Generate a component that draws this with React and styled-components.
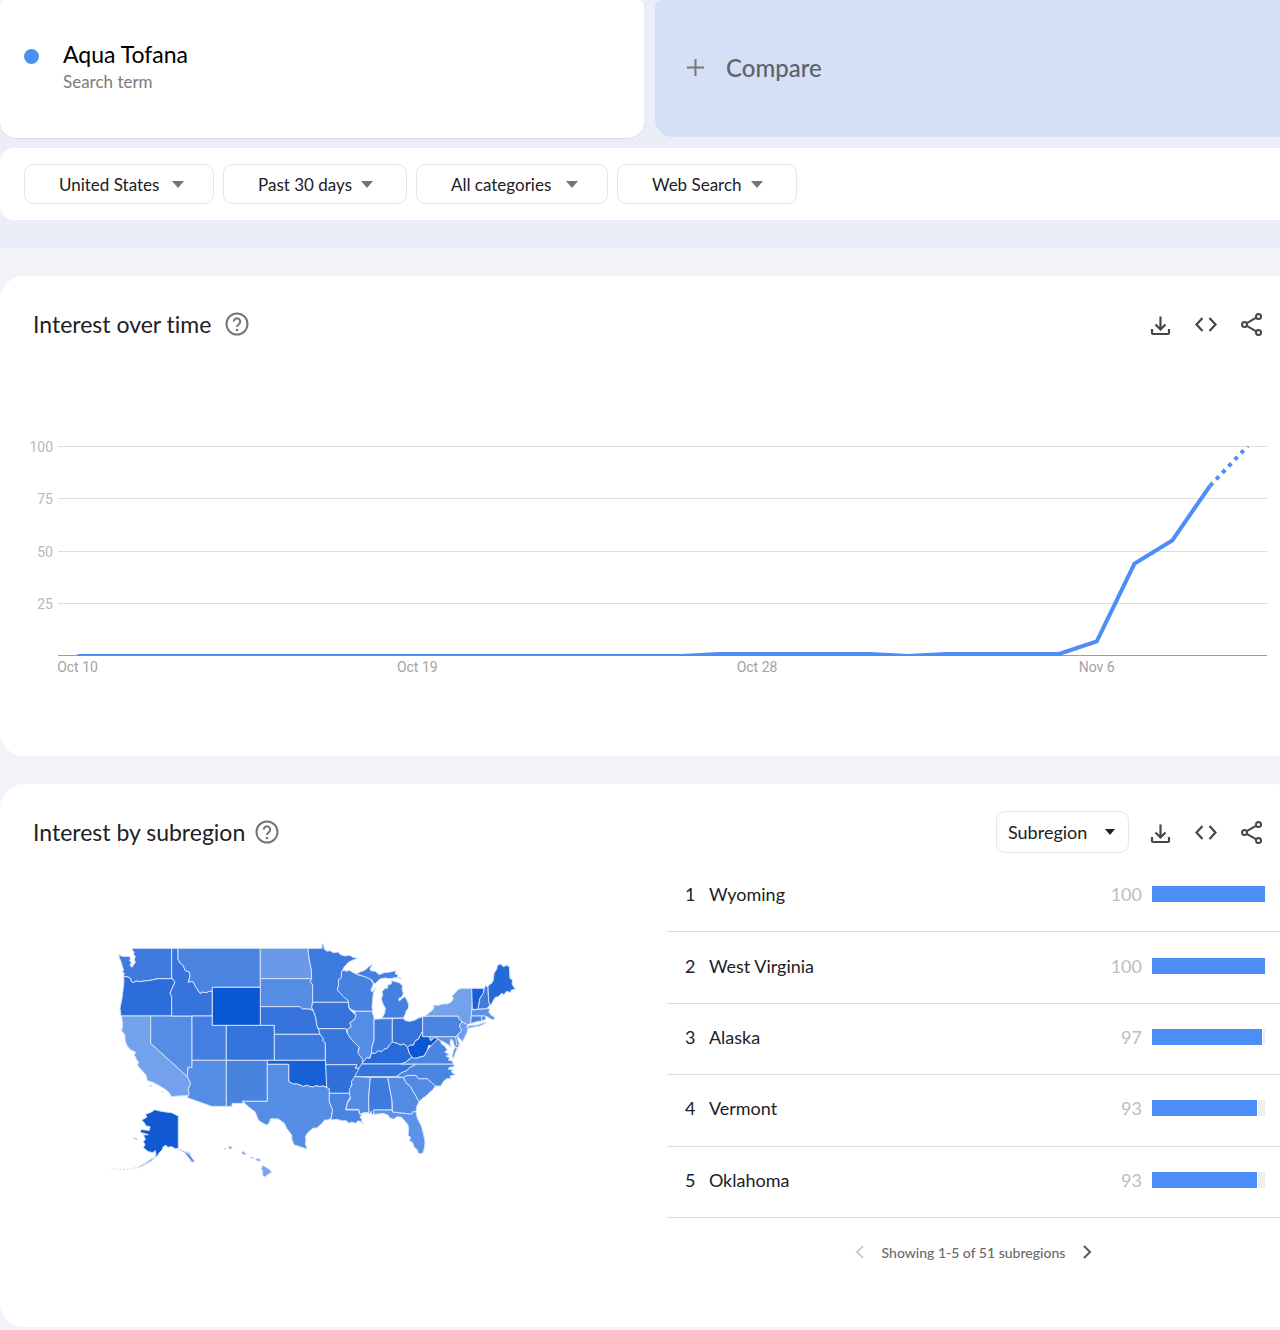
import React from 'react';
import styled, { createGlobalStyle } from 'styled-components';

const GlobalStyle = createGlobalStyle`
  * {
    box-sizing: border-box;
  }

  body {
    margin: 0;
    background-color: #f2f3f8;
    color: #202124;
    font-family: Lato, Roboto, sans-serif;
    font-variant-ligatures: none;
    overflow-x: hidden;
  }

  button,
  select {
    font-family: inherit;
    color: inherit;
  }
`;

const Page = styled.div`
  overflow: hidden;
  padding-bottom: 3px;
`;

const TopArea = styled.header`
  background-color: #ebeef8;
  padding-bottom: 28px;
`;

const Terms = styled.div`
  display: grid;
  grid-template-columns: 1fr 1fr;
  gap: 11px;
  height: 138px;
  margin-right: -19px;
`;

const TermCard = styled.section`
  display: flex;
  align-items: flex-start;
  padding: 40px 24px;
  background-color: #fff;
  border-radius: 4px 6px 16px 16px;
  box-shadow: 0 1px 1px rgba(60, 64, 67, 0.1);
`;

const Dot = styled.span`
  width: 15px;
  height: 15px;
  margin: 9px 24px 0 0;
  border-radius: 50%;
  background-color: #4c8df6;
`;

const TermName = styled.h1`
  margin: 0;
  color: #000;
  font-size: 23px;
  font-weight: 400;
  line-height: 28px;
`;

const TermKind = styled.p`
  margin: 4px 0 0;
  color: #7c7c7c;
  font-size: 17px;
  line-height: 20px;
`;

const CompareButton = styled.button`
  display: flex;
  align-items: center;
  gap: 22px;
  height: 137px;
  padding: 0 32px 3px;
  border: 0;
  border-radius: 8px 0 0 18px;
  background-color: #d5dff6;
  color: #5f6368;
  font-size: 24px;
  font-weight: 500;
`;

const Filters = styled.form`
  display: flex;
  gap: 9px;
  margin-top: 10px;
  margin-right: -19px;
  padding: 16px 24px;
  border-radius: 14px;
  background-color: #fff;
`;

const SelectBox = styled.label`
  position: relative;
  display: block;
`;

const Select = styled.select`
  appearance: none;
  width: ${({ $width }) => $width}px;
  height: ${({ $tall }) => ($tall ? 42 : 40)}px;
  padding: 0 0 0 ${({ $tall }) => ($tall ? 11 : 34)}px;
  border: 1px solid #e6e7e9;
  border-radius: 9px;
  background-color: #fff;
  font-size: ${({ $tall }) => ($tall ? 18 : 17)}px;
`;

const Arrow = styled.span`
  position: absolute;
  top: 50%;
  right: ${({ $right }) => $right}px;
  margin-top: -3px;
  border: solid transparent;
  border-width: ${({ $dark }) => ($dark ? '6px 5px 0' : '7px 6px 0')};
  border-top-color: ${({ $dark }) => ($dark ? '#202124' : '#757575')};
  pointer-events: none;
`;

const Card = styled.section`
  margin: 28px -19px 0 0;
  padding-right: 19px;
  border-radius: 24px;
  background-color: #fff;
`;

const CardHeader = styled.div`
  display: flex;
  align-items: center;
  height: 96px;
  padding: 0 16px 0 33px;
`;

const CardTitle = styled.h2`
  margin: 0;
  font-size: 23px;
  font-weight: 400;
`;

const IconButton = styled.button`
  display: flex;
  padding: 0;
  border: 0;
  background: none;
  color: ${({ $color }) => $color || '#444746'};
`;

const HelpButton = styled(IconButton)`
  margin-left: ${({ $gap }) => $gap}px;
`;

const Actions = styled.div`
  display: flex;
  align-items: center;
  gap: 19px;
  margin-left: auto;
`;

const ActionIcons = styled.div`
  display: flex;
  gap: 22px;
`;

const ChartArea = styled.div`
  padding: 64px 0 70px;

  svg {
    display: block;
    width: 100%;
  }

  text {
    fill: #a3a3a3;
    font-family: Roboto, sans-serif;
    font-size: 14px;
  }

  .value {
    fill: #b8b8b8;
  }
`;

const RegionBody = styled.div`
  display: grid;
  grid-template-columns: minmax(0, 52.1fr) minmax(0, 47.9fr);
  margin-top: -19px;
  padding-bottom: 41px;
`;

const MapArea = styled.div`
  padding: 69px 0 0 15%;

  svg {
    display: block;
    width: 420px;
    height: 260px;
  }
`;

const RegionList = styled.ol`
  display: grid;
  grid-auto-rows: 1fr;
  height: 357px;
  margin: 0;
  padding: 0;
  list-style: none;
`;

const RegionRow = styled.li`
  display: flex;
  align-items: center;
  padding: 0 15px 4px 18px;
  border-bottom: 1px solid #dcdde0;
  font-size: 18px;
`;

const Rank = styled.span`
  width: 24px;
`;

const RegionName = styled.span`
  flex: 1;
`;

const Value = styled.span`
  margin-right: 10px;
  color: #bdbdbd;
`;

const BarTrack = styled.span`
  width: 113px;
  height: 16px;
  background-color: #eee;
`;

const BarFill = styled.span`
  display: block;
  box-sizing: content-box;
  height: 100%;
  border-right: ${({ $full }) => ($full ? 0 : '1px solid #fff')};
  background-color: #4c8df6;
`;

const Pager = styled.nav`
  display: flex;
  align-items: center;
  justify-content: center;
  gap: 12px;
  height: 68px;
  color: #6b6b6b;
  font-size: 14px;
  font-weight: 500;
`;

const HelpIcon = () => (
  <svg width="24" height="24" viewBox="0 0 24 24" fill="none" stroke="currentColor" strokeWidth="2">
    <circle cx="12" cy="12" r="10.5" />
    <path d="M8.8 9.6a3.2 3.2 0 1 1 5.3 2.3C12.9 12.9 12 13.5 12 15" />
    <circle cx="12" cy="18" r="1.3" fill="currentColor" stroke="none" />
  </svg>
);

const DownloadIcon = () => (
  <svg width="24" height="24" viewBox="0 0 24 24" fill="none" stroke="currentColor" strokeWidth="2.2">
    <path d="M12.500 4.500v13M7.500 12.500l5 5 5-5" />
    <path d="M4 17v4a1 1 0 0 0 1 1h15a1 1 0 0 0 1-1v-4" />
  </svg>
);

const CodeIcon = () => (
  <svg width="24" height="24" viewBox="0 0 24 24" fill="none" stroke="currentColor" strokeWidth="2.2">
    <path d="M8.5 6l-6 6.500 6 6.500M15.500 6l6 6.500-6 6.500" />
  </svg>
);

const ShareIcon = () => (
  <svg width="24" height="24" viewBox="0 0 24 24" fill="none" stroke="currentColor" strokeWidth="2">
    <circle cx="4.500" cy="12.500" r="2.500" />
    <circle cx="18.500" cy="4.500" r="2.500" />
    <circle cx="18.500" cy="20.500" r="2.500" />
    <path d="M6.800 11.200l9.500-5.500M6.800 13.800l9.500 5.500" />
  </svg>
);

const PlusIcon = () => (
  <svg width="17" height="17" viewBox="0 0 17 17" stroke="#757a7a" strokeWidth="2">
    <path d="M8.5 0v17M0 8.500h17" />
  </svg>
);

const Chevron = ({ d }) => (
  <svg width="20" height="20" viewBox="0 0 20 20" fill="none" stroke="currentColor" strokeWidth="2.2">
    <path d={d} />
  </svg>
);

const filters = [
  { label: 'Location', value: 'United States', width: 190, right: 30 },
  { label: 'Time range', value: 'Past 30 days', width: 184, right: 34 },
  { label: 'Category', value: 'All categories', width: 192, right: 30 },
  { label: 'Search type', value: 'Web Search', width: 180, right: 34 },
];

const regions = [
  { name: 'Wyoming', value: 100 },
  { name: 'West Virginia', value: 100 },
  { name: 'Alaska', value: 97 },
  { name: 'Vermont', value: 93 },
  { name: 'Oklahoma', value: 93 },
];

// daily values from Oct 10, the last one is still partial
const interest = [
  0, 0, 0, 0, 0, 0, 0, 0, 0, 0, 0, 0, 0, 0, 0, 0, 0, 1, 1, 1, 1, 1, 0, 1, 1, 1, 1, 7, 44, 55, 81, 100,
];

const ticks = [
  { day: 0, label: 'Oct 10' },
  { day: 9, label: 'Oct 19' },
  { day: 18, label: 'Oct 28' },
  { day: 27, label: 'Nov 6' },
];

const xOf = (day) => 77.5 + day * 37.75;
const yOf = (value) => 220 - value * 2.1;

const TimeChart = () => {
  const points = interest.map((value, day) => `${xOf(day)},${yOf(value)}`);

  return (
    <svg viewBox="0 0 1280 250" role="img" aria-label="Interest over time">
      <clipPath id="plot">
        <rect x="58" y="10" width="1210" height="210" />
      </clipPath>
      {[25, 50, 75, 100].map((value) => (
        <g key={value}>
          <rect x="58" y={Math.floor(yOf(value))} width="1209" height="1" fill="#dedede" />
          <text className="value" x="53" y={Math.floor(yOf(value)) + 6} textAnchor="end">
            {value}
          </text>
        </g>
      ))}
      <rect x="58" y="219" width="1209" height="1" fill="#9e9e9e" />
      <g clipPath="url(#plot)" fill="none" stroke="#4c8df6" strokeWidth="4">
        <polyline points={points.slice(0, -1).join(' ')} />
        <polyline points={points.slice(-2).join(' ')} strokeDasharray="4 5" />
      </g>
      {ticks.map(({ day, label }) => (
        <text key={label} x={xOf(day)} y="236" textAnchor="middle">
          {label}
        </text>
      ))}
    </svg>
  );
};

const westStates = [
  ['WA', '#3f7bdf', '97,55 215,55 215,140 217,146 175,146 160,149 145,152 132,153 120,155 108,153 100,158 94,155 92,146 84,141 75,140 70,138 73,130 67,125 71,121 68,112 64,98 59,86 56,74 65,78 75,80 86,79 92,84 89,92 94,98 90,106 96,112 100,105 106,98 103,88 106,80 100,72 103,66 97,62'],
  ['OR', '#2c6ed9', '70,138 75,140 84,141 92,146 94,155 100,158 108,153 120,155 132,153 145,152 160,149 175,146 217,146 225,156 220,167 215,178 210,190 215,200 215,258 63,258 60,235 66,205 69,180 71,165 72,150'],
  ['CA', '#74a1ec', '65,258 152,258 152,340 262,440 272,460 264,480 268,490 262,497 235,498 215,500 211,494 205,485 195,478 180,468 170,463 157,456 142,452 138,435 128,424 116,410 112,405 116,397 109,388 105,378 101,375 108,368 98,362 92,360 80,345 75,330 75,315 65,302 68,285'],
  ['NV', '#558de4', '152,258 276,258 276,412 264,412 262,440 152,340'],
  ['ID', '#3674dc', '215,55 234,55 234,88 240,98 250,108 256,122 268,126 270,137 265,158 270,154 280,156 285,167 290,175 300,190 308,186 320,188 328,183 337,185 337,258 215,258 215,200 210,190 215,178 225,156 217,146 215,140'],
  ['MT', '#4a84e0', '234,55 481,55 481,172 337,172 337,185 328,183 320,188 308,186 300,190 290,175 285,167 280,156 270,154 265,158 270,137 268,126 256,122 250,108 240,98 234,88'],
  ['UT', '#437fe0', '276,258 337,258 337,286 379,286 379,391 276,391'],
  ['CO', '#3473dc', '379,286 523,286 523,391 379,391'],
  ['AZ', '#548de4', '276,391 379,391 379,529 335,529 262,503 268,490 264,480 272,460 262,440 264,412 276,412'],
  ['NM', '#4883e0', '379,391 502,391 502,514 428,514 428,520 396,520 396,529 379,529'],
  ['ND', '#6a99e9', '481,55 624,55 625,70 628,90 634,120 635,146 481,146'],
  ['SD', '#558de4', '481,146 635,146 631,155 638,165 638,217 635,232 640,243 630,237 622,238 615,236 608,238 600,230 481,230'],
  ['NE', '#3674dc', '481,230 600,230 608,238 615,236 622,238 630,237 640,243 648,265 650,285 658,305 660,313 523,313 523,286 481,286'],
  ['KS', '#3f7cdf', '523,313 660,313 670,325 668,332 676,338 676,391 523,391'],
  ['OK', '#1860d5', '502,391 676,391 680,430 680,472 668,468 660,470 648,467 640,471 628,469 620,466 610,470 600,465 590,462 580,462 566,455 566,403 502,403'],
  ['TX', '#558de5', '502,403 566,403 566,455 580,462 590,462 600,465 610,470 620,466 628,469 640,471 648,467 660,470 668,468 680,472 688,476 688,515 698,540 693,565 684,570 674,570 668,578 660,586 650,594 640,594 630,602 622,610 616,620 618,632 616,642 622,657 612,654 600,650 583,645 576,630 575,615 560,595 553,580 535,567 512,566 508,578 500,585 486,578 475,570 465,545 445,530 428,514 502,514'],
  ['MN', '#3c7ade', '624,55 666,55 666,42 670,42 673,58 682,64 690,62 700,68 715,66 722,74 735,78 750,76 758,82 772,85 755,92 745,97 732,112 725,125 724,143 715,150 716,165 712,180 730,195 745,212 745,217 638,217 638,165 631,155 635,146 634,120 628,90 625,70'],
  ['IA', '#3674dc', '638,217 745,217 747,235 754,243 768,256 764,268 750,278 754,290 742,300 735,296 655,296 650,285 648,265 640,243 635,232'],
  ['MO', '#3876dd', '655,296 738,296 742,310 752,325 765,338 778,348 774,362 788,385 788,398 778,415 766,415 770,404 677,404 676,338 668,332 670,325 660,313 658,305'],
  ['AR', '#2f70da', '677,404 770,404 766,415 778,415 772,430 766,440 755,460 752,475 748,490 688,490 688,476 680,472'],
  ['LA', '#4a84e1', '688,490 748,490 752,500 744,512 740,525 737,540 776,540 778,552 785,554 780,562 787,570 782,574 792,583 775,572 766,580 755,576 748,580 738,572 725,572 712,568 693,570 698,540 688,515'],
  ['WY', '#0957d2', '337,172 481,172 481,286 337,286'],
  ['AK', '#1059d2', '125,570 140,562 137,552 150,548 165,539 175,542 190,545 215,548 235,558 235,655 226,656 215,650 203,652 198,646 190,650 186,660 178,668 172,678 162,682 168,674 166,662 158,668 145,665 138,660 130,652 135,644 130,635 136,628 130,615 145,614 120,607 124,598 135,600 148,601 150,590 138,588 134,580'],
  ['AK-panhandle', '#5288e2', '235,655 250,663 262,668 272,678 284,694 278,697 266,684 256,670 244,662'],
  ['AK-islands', '#6a99e9', '165,682 155,692 140,701 125,709 110,714 124,706 140,697 152,688'],
  ['HI', '#78a4ee', '489,706 500,713 507,717 515,727 505,733 494,741 487,735 488,724 484,715'],
  ['HI-maui', '#78a4ee', '467,687 474,685 483,690 478,694 470,692'],
  ['HI-oahu', '#78a4ee', '424,667 430,664 440,673 430,674'],
  ['HI-kauai', '#78a4ee', '384,652 390,648 397,652 392,658'],
];

const eastStates = [
  ['WI', '#4682e0', '94,125 102,120 108,124 118,121 130,128 145,135 165,140 182,148 190,162 183,182 187,186 196,172 190,190 188,210 186,230 188,244 138,244 126,240 117,232 115,212 100,200 82,180 86,165 85,150 94,143'],
  ['MI-upper', '#4380e0', '138,132 150,126 166,120 176,110 188,103 180,116 182,122 196,124 208,134 222,128 240,126 258,122 256,132 264,134 262,142 276,145 255,143 240,146 226,144 212,146 204,152 198,160 190,160 186,150 165,140'],
  ['MI-lower', '#4380e0', '216,264 224,250 226,235 218,220 214,206 218,196 216,185 226,174 232,176 234,164 244,162 244,152 256,155 268,158 278,168 276,178 280,190 276,200 266,206 268,213 278,204 285,200 291,210 296,224 295,236 290,240 286,252 280,264'],
  ['IL', '#548de4', '133,244 186,244 192,262 192,330 186,350 184,370 178,385 170,383 166,392 158,398 156,385 144,370 148,352 135,340 122,325 112,310 112,298 124,290 120,278 134,268 138,256'],
  ['IN', '#3f7cdf', '192,268 218,266 247,266 247,338 238,345 232,355 222,358 214,366 205,362 196,370 184,370 186,350 192,330'],
  ['OH', '#3473db', '247,266 280,265 286,272 300,274 315,270 325,264 338,260 338,305 330,318 325,328 316,332 310,346 300,345 293,352 282,342 270,345 262,340 247,336'],
  ['KY', '#266bd8', '155,402 158,398 170,383 180,385 184,370 196,370 205,362 214,366 222,358 232,355 238,345 247,336 262,340 270,345 282,342 293,352 298,370 308,380 285,398 272,402'],
  ['TN', '#3574dc', '155,402 316,402 314,406 300,412 290,422 275,428 260,440 134,440 142,425 148,412'],
  ['MS', '#548ce4', '134,440 181,442 176,500 177,548 162,548 150,552 146,538 108,538 112,520 122,505 118,492 118,478 126,465 124,455'],
  ['AL', '#3d7bdf', '181,442 233,442 242,490 246,510 246,540 190,540 192,550 186,554 183,544 180,552 177,548 176,500'],
  ['FL', '#5c92e7', '190,540 246,540 248,546 305,552 308,545 318,545 322,565 334,588 340,610 345,635 343,655 338,670 326,672 322,660 312,650 308,638 298,632 302,622 294,616 296,600 294,585 284,572 275,562 262,560 250,568 240,564 235,556 220,550 205,552 192,553'],
  ['GA', '#528be4', '233,442 280,442 288,458 302,470 310,485 318,498 327,515 320,530 318,545 308,545 305,552 248,546 246,510 242,490'],
  ['SC', '#528ae4', '280,442 292,436 318,436 326,446 352,446 376,468 368,480 360,486 348,498 336,506 327,515 318,498 310,485 302,470 288,458'],
  ['NC', '#4a85e1', '316,402 430,402 434,410 418,412 415,418 428,418 424,426 436,434 420,438 424,446 410,446 400,455 392,468 376,468 352,446 326,446 318,436 292,436 280,442 260,440 275,428 290,422 300,412 314,406'],
  ['VA', '#4a85e1', '272,402 430,402 426,392 414,390 420,385 408,378 418,374 404,366 412,360 404,348 394,342 392,332 382,328 372,338 362,348 352,360 342,378 320,384 308,380 285,398'],
  ['MD', '#5a91e6', '358,320 437,320 440,336 449,344 442,354 434,348 428,330 422,328 420,340 424,352 416,345 408,340 398,334 392,332 382,326 375,322 362,332'],
  ['DE', '#4a85e1', '437,320 442,318 444,332 449,344 440,344'],
  ['VA-shore', '#5a91e6', '434,352 442,356 436,368 430,386 426,378 430,366'],
  ['PA', '#4a85e1', '338,260 352,258 445,258 448,268 456,275 448,288 455,302 446,312 437,320 338,320'],
  ['NY', '#74a1ec', '345,258 358,248 368,240 372,232 370,225 385,226 400,222 412,222 425,215 430,205 426,198 436,188 445,178 457,175 485,175 487,215 485,240 484,258 482,278 474,285 458,276 448,268 445,258'],
  ['NY-long-island', '#74a1ec', '468,294 480,286 500,285 525,277 530,278 510,288 488,292 470,297'],
  ['NJ', '#6d9deb', '456,275 473,285 470,292 474,296 470,310 464,322 458,335 450,326 442,320 446,312 455,302 448,288'],
  ['VT', '#1860d5', '485,175 523,175 520,190 510,205 508,215 504,238 487,238'],
  ['NH', '#3d7bdf', '523,175 526,167 534,170 536,215 540,225 530,236 504,238 508,215 510,205 520,190'],
  ['ME', '#246ad8', '534,170 540,162 545,160 550,150 552,130 560,118 562,106 572,102 580,110 590,106 598,110 600,145 608,150 606,162 616,178 604,180 602,188 590,184 582,194 574,190 566,200 556,202 548,215 544,224 540,225 536,215'],
  ['MA', '#5a90e6', '485,240 530,236 540,236 536,246 544,256 554,262 552,270 540,266 535,262 525,258 484,258'],
  ['CT', '#4682e0', '484,258 515,258 515,273 500,275 482,281'],
  ['RI', '#4682e0', '515,258 525,258 528,268 515,273'],
  ['WV', '#0957d2', '293,352 300,345 310,346 316,332 325,328 330,318 337,305 338,320 358,320 362,332 375,322 383,328 372,338 362,348 356,346 352,360 342,378 332,380 320,384 308,384 298,370'],
];

const renderState = ([code, color, points]) => <polygon key={code} points={points} fill={color} />;

const StateMap = () => (
  <svg viewBox="0 0 1260 780" role="img" aria-label="Map of the United States" stroke="#d3e1f9" strokeWidth="3" strokeLinejoin="round">
    {westStates.map(renderState)}
    <g transform="translate(630 0)">{eastStates.map(renderState)}</g>
    <path d="M108 713Q70 724 30 714" fill="none" stroke="#9dbdf2" strokeWidth="2" strokeDasharray="5 6" />
    <path d="M100 625l12 3M148 466l8 3M184 484l5 2M372 658l5-2M450 682l12 2M262 664l10 10M270 692l8 4" stroke="#9dbdf2" />
  </svg>
);

const ShareActions = () => (
  <ActionIcons>
    <IconButton type="button" aria-label="Download CSV">
      <DownloadIcon />
    </IconButton>
    <IconButton type="button" aria-label="Embed">
      <CodeIcon />
    </IconButton>
    <IconButton type="button" aria-label="Share">
      <ShareIcon />
    </IconButton>
  </ActionIcons>
);

const App = () => (
  <Page>
    <GlobalStyle />
    <TopArea>
      <Terms>
        <TermCard>
          <Dot />
          <div>
            <TermName>Aqua Tofana</TermName>
            <TermKind>Search term</TermKind>
          </div>
        </TermCard>
        <CompareButton type="button">
          <PlusIcon />
          Compare
        </CompareButton>
      </Terms>
      <Filters>
        {filters.map(({ label, value, width, right }) => (
          <SelectBox key={label}>
            <Select $width={width} aria-label={label}>
              <option>{value}</option>
            </Select>
            <Arrow $right={right} />
          </SelectBox>
        ))}
      </Filters>
    </TopArea>

    <Card>
      <CardHeader>
        <CardTitle>Interest over time</CardTitle>
        <HelpButton type="button" aria-label="Help" $gap={14} $color="#757575">
          <HelpIcon />
        </HelpButton>
        <Actions>
          <ShareActions />
        </Actions>
      </CardHeader>
      <ChartArea>
        <TimeChart />
      </ChartArea>
    </Card>

    <Card>
      <CardHeader>
        <CardTitle>Interest by subregion</CardTitle>
        <HelpButton type="button" aria-label="Help" $gap={10} $color="#757575">
          <HelpIcon />
        </HelpButton>
        <Actions>
          <SelectBox>
            <Select $width={133} $tall aria-label="Region level">
              <option>Subregion</option>
            </Select>
            <Arrow $dark $right={14} />
          </SelectBox>
          <ShareActions />
        </Actions>
      </CardHeader>
      <RegionBody>
        <MapArea>
          <StateMap />
        </MapArea>
        <div>
          <RegionList>
            {regions.map(({ name, value }, index) => (
              <RegionRow key={name}>
                <Rank>{index + 1}</Rank>
                <RegionName>{name}</RegionName>
                <Value>{value}</Value>
                <BarTrack>
                  <BarFill $full={value === 100} style={{ width: `${value}%` }} />
                </BarTrack>
              </RegionRow>
            ))}
          </RegionList>
          <Pager aria-label="Subregion pages">
            <IconButton type="button" aria-label="Previous" $color="#cfcfcf" disabled>
              <Chevron d="M13 4l-6 6 6 6" />
            </IconButton>
            Showing 1-5 of 51 subregions
            <IconButton type="button" aria-label="Next" $color="#616161">
              <Chevron d="M7 4l6 6-6 6" />
            </IconButton>
          </Pager>
        </div>
      </RegionBody>
    </Card>
  </Page>
);

export default App;
